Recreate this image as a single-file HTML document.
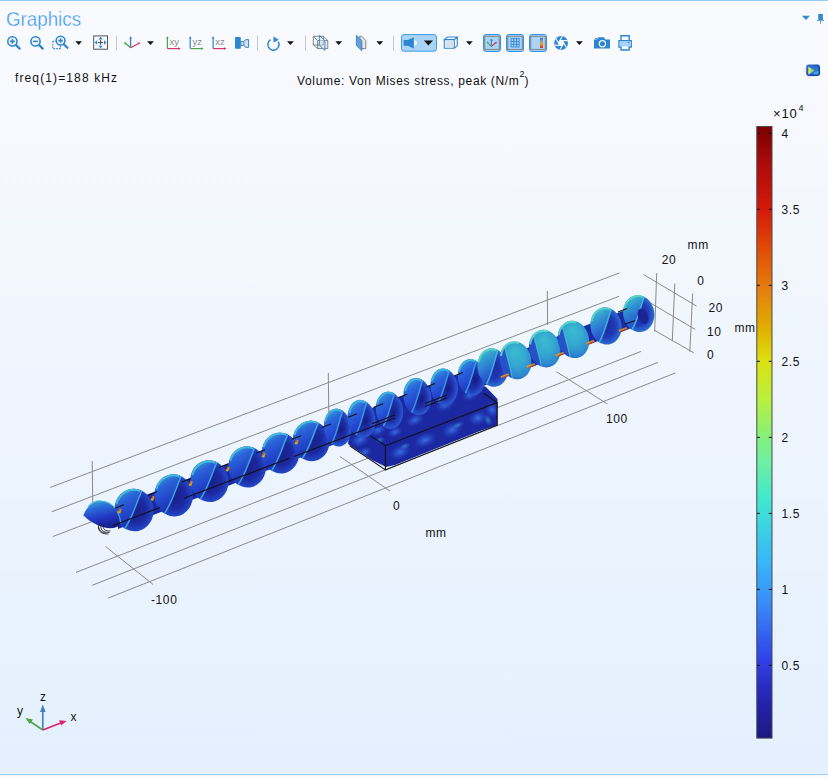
<!DOCTYPE html>
<html><head><meta charset="utf-8">
<style>
html,body{margin:0;padding:0;}
body{width:828px;height:778px;position:relative;overflow:hidden;font-family:"Liberation Sans",sans-serif;
background:linear-gradient(to bottom,#f9fafe 0px,#f7f9fe 100px,#eef5fe 405px,#e4f0fe 772px);}
.t{position:absolute;white-space:nowrap;font-size:12px;line-height:12px;color:#111;}
#topb{position:absolute;left:0;top:0;width:828px;height:1px;background:#90ccf6;}
#topw{position:absolute;left:0;top:1px;width:828px;height:1px;background:#fdfeff;}
#botb{position:absolute;left:0;top:774px;width:828px;height:1px;background:#9ccff8;}
#botw{position:absolute;left:0;top:775px;width:828px;height:3px;background:#f8fafe;}
#title{position:absolute;left:6px;top:8.1px;font-size:21px;line-height:21px;color:#3a98ec;white-space:nowrap;transform-origin:0 0;transform:scaleX(0.893);-webkit-text-stroke:0.35px #f8f9fe;}
svg{position:absolute;left:0;top:0;}
</style></head><body>
<div id="topb"></div><div id="topw"></div><div id="botb"></div><div id="botw"></div>
<div id="title">Graphics</div>
<svg width="828" height="60" viewBox="0 0 828 60" style="top:0;left:0">
<g fill="none" stroke="#2f86d0" stroke-width="1.6">
  <circle cx="12.4" cy="41.4" r="4.6"/><path d="M10 41.4H14.9M12.4 39V43.8"/>
  <path d="M16 45L19.6 48.6" stroke-width="2.3" stroke-linecap="round"/>
  <circle cx="35.5" cy="41.4" r="4.6"/><path d="M33 41.4H38"/>
  <path d="M39.1 45L42.7 48.6" stroke-width="2.3" stroke-linecap="round"/>
  <circle cx="60.6" cy="40.6" r="4.4"/><path d="M58.4 40.6H62.8M60.6 38.4V42.8"/>
  <path d="M63.8 44.2L67.4 47.8" stroke-width="2.3" stroke-linecap="round"/>
  <path d="M52.8 41.2h5M52.8 41.2v7.4h7.6v-3" stroke-dasharray="1.6 1.1" stroke-width="1.1"/>
</g>
<g fill="#111">
  <path d="M75.4 41.3h6.5l-3.25 3.7z"/>
  <path d="M147.1 41.2h6.8l-3.4 3.8z"/>
  <path d="M287 41.2h6.8l-3.4 3.8z"/>
  <path d="M335.3 41.2h6.8l-3.4 3.8z"/>
  <path d="M376.4 41.2h6.8l-3.4 3.8z"/>
  <path d="M466 41.2h6.8l-3.4 3.8z"/>
  <path d="M576 41.2h6.8l-3.4 3.8z"/>
</g>
<!-- zoom extents -->
<rect x="93.7" y="35.9" width="13.8" height="13.3" fill="none" stroke="#555" stroke-width="1"/>
<g fill="#2f86d0"><path d="M100.6 36.8l2.2 2.6h-4.4z M100.6 48.3l2.2-2.6h-4.4z M94.6 42.5l2.6-2.2v4.4z M106.6 42.5l-2.6-2.2v4.4z"/></g>
<path d="M98 42.5h5.2M100.6 39.9v5.2" stroke="#555" stroke-width="1.1"/>
<g stroke="#c8c8c8" stroke-width="1"><path d="M116.5 35.5V50.5M257.5 35.5V50.5M305.5 35.5V50.5M393.5 35.5V50.5"/></g>
<!-- axis icon -->
<g stroke-width="1.3" fill="none">
 <path d="M130.6 47.8V37.5" stroke="#2f86d0"/><path d="M130.6 47.8L124.6 42.6" stroke="#4aa84a"/><path d="M130.6 47.8L139.6 43" stroke="#d8346a"/>
</g>
<path d="M130.6 36.2l-1.5 2.4h3z" fill="#2f86d0"/><path d="M124.2 42.2l0.6 2.6 1.6-1.9z" fill="#4aa84a"/><path d="M140.2 42.6l-2.6-0.1 1 2z" fill="#d8346a"/>
<!-- xy yz xz -->
<g stroke-width="1.2" fill="none">
 <path d="M167.4 37.4V48.6" stroke="#4aa84a"/><path d="M167.4 48.6H179.4" stroke="#d8346a"/>
 <path d="M190.2 37.4V48.6" stroke="#2f86d0"/><path d="M190.2 48.6H202.4" stroke="#4aa84a"/>
 <path d="M213.1 37.4V48.6" stroke="#2f86d0"/><path d="M213.1 48.6H225.2" stroke="#d8346a"/>
</g>
<path d="M167.4 36.2l-1.4 2.2h2.8z" fill="#4aa84a"/><path d="M180.6 48.6l-2.2-1.4v2.8z" fill="#d8346a"/>
<path d="M190.2 36.2l-1.4 2.2h2.8z" fill="#2f86d0"/><path d="M203.6 48.6l-2.2-1.4v2.8z" fill="#4aa84a"/>
<path d="M213.1 36.2l-1.4 2.2h2.8z" fill="#2f86d0"/><path d="M226.4 48.6l-2.2-1.4v2.8z" fill="#d8346a"/>
<g font-family="Liberation Sans" font-size="9.5" fill="#8c8c8c">
 <text x="169.6" y="44.8">xy</text><text x="192.4" y="44.8">yz</text><text x="215.3" y="44.8">xz</text>
</g>
<!-- camera/speaker -->
<rect x="235" y="37.1" width="5.8" height="11.6" rx="0.8" fill="#2f86d0"/>
<path d="M240.8 41.5h2.8l2.4-1.9h2.6v7.8h-2.6l-2.4-1.9h-2.8z" fill="#d8dde8" stroke="#2f86d0" stroke-width="1"/>
<path d="M243.9 41.6v3.8" stroke="#2f86d0" stroke-width="0.9"/>
<!-- rotate -->
<path d="M278.2 41.6A5.6 5.6 0 1 1 270.6 39.7" fill="none" stroke="#2f86d0" stroke-width="1.5"/>
<path d="M273.4 36.4l5.4 3.4-5.2 2.6z" fill="#2f86d0"/>
<!-- wireframe cube -->
<path d="M317.6 40.6h10.2v8h-10.2z" fill="#e8e8e8"/>
<g fill="none" stroke="#777" stroke-width="0.9">
 <path d="M313.3 36.3h10.1l4.4 4.3v8h-10.2l-4.3-3.6z M313.3 36.3l4.3 4.3h10.2 M317.6 40.6v8 M313.3 45h10.1v-8.7"/>
</g>
<path d="M319.4 35.2l5.5 5.4v9.8l-5.5-5.1z" fill="#cfe0f2" fill-opacity="0.5" stroke="#2f86d0" stroke-width="0.9"/>
<!-- box with blue side -->
<path d="M359.6 36.3h2.2l4 4.3v8h-4z" fill="#e8e8e8" stroke="#777" stroke-width="0.9"/>
<path d="M356.4 35.2l5.4 5.4v10.2l-5.4-5.5z" fill="#6c9ed6" stroke="#2f86d0" stroke-width="0.9"/>
<!-- selected light button -->
<rect x="401.5" y="34.6" width="35" height="16.6" rx="2.5" fill="#a9d3f7" stroke="#3d9be8" stroke-width="1"/>
<path d="M403.6 40h4.2l6-2.8v11.4l-6-2.8h-4.2z" fill="#2f86d0"/>
<path d="M414.2 40.2a2.6 2.6 0 0 1 0 5.6z" fill="#eef6fe"/>
<path d="M423.8 40.6h9.2l-4.6 4.8z" fill="#111"/>
<!-- box icon -->
<g fill="none" stroke="#2f86d0" stroke-width="1.1">
 <path d="M444.3 39.6l3-2.6h10l-3 2.6z M444.3 39.6v8.6h10v-8.6 M457.3 37v8.6l-3 2.6"/>
</g>
<path d="M445.6 40.8h7.6v6.2h-7.6z" fill="#d4e2f0"/>
<!-- toggled buttons -->
<g>
 <rect x="483.5" y="34.5" width="17" height="17" rx="2.2" fill="#a9d3f7" stroke="#2a92f0" stroke-width="1"/>
 <rect x="484.7" y="36.3" width="14.6" height="13.2" fill="none" stroke="#868686" stroke-width="1.1"/>
 <path d="M491.4 46.4v-6.4" stroke="#2f86d0" stroke-width="1.1"/><path d="M491.4 38.6l-1.5 2h3z" fill="#2f86d0"/>
 <path d="M491.4 46.4l-3.6-3.6" stroke="#4aa84a" stroke-width="1.1"/><circle cx="487.6" cy="42.6" r="0.9" fill="#4aa84a"/>
 <path d="M491.4 46.4l4.4-3.6" stroke="#d8346a" stroke-width="1.1"/><circle cx="496" cy="42.6" r="0.9" fill="#d8346a"/>
 <rect x="506.5" y="34.5" width="17" height="17" rx="2.2" fill="#a9d3f7" stroke="#2a92f0" stroke-width="1"/>
 <rect x="507.7" y="36.3" width="14.6" height="13.2" fill="none" stroke="#868686" stroke-width="1.1"/>
 <rect x="510.6" y="38.2" width="9" height="9.2" fill="#2f86d0"/>
 <g fill="#a9d3f7"><rect x="511.5" y="39.1" width="1.8" height="1.9"/><rect x="514.2" y="39.1" width="1.8" height="1.9"/><rect x="516.9" y="39.1" width="1.8" height="1.9"/><rect x="511.5" y="41.9" width="1.8" height="1.9"/><rect x="514.2" y="41.9" width="1.8" height="1.9"/><rect x="516.9" y="41.9" width="1.8" height="1.9"/><rect x="511.5" y="44.7" width="1.8" height="1.9"/><rect x="514.2" y="44.7" width="1.8" height="1.9"/><rect x="516.9" y="44.7" width="1.8" height="1.9"/></g>
 <rect x="529.5" y="34.5" width="17" height="17" rx="2.2" fill="#a9d3f7" stroke="#2a92f0" stroke-width="1"/>
 <rect x="530.7" y="36.3" width="14.6" height="13.2" fill="none" stroke="#868686" stroke-width="1.1"/>
 <defs><linearGradient id="lg1" x1="0" y1="0" x2="0" y2="1"><stop offset="0" stop-color="#3a78c0"/><stop offset="0.35" stop-color="#9aa0a0"/><stop offset="0.6" stop-color="#f0a010"/><stop offset="1" stop-color="#e02040"/></linearGradient></defs>
 <rect x="540" y="37.9" width="3" height="10.1" fill="url(#lg1)"/>
</g>
<!-- aperture -->
<circle cx="561.1" cy="43.0" r="6.9" fill="#2f86d0"/>
<path d="M563.80 43.00 L562.45 45.34 L559.75 45.34 L558.40 43.00 L559.75 40.66 L562.45 40.66Z" fill="#f8f9fe"/>
<path d="M563.80 43.00L559.88 49.79 M562.45 45.34L554.61 45.34 M559.75 45.34L555.83 38.55 M558.40 43.00L562.32 36.21 M559.75 40.66L567.59 40.66 M562.45 40.66L566.37 47.45" stroke="#f8f9fe" stroke-width="1.1"/>
<!-- camera -->
<path d="M594 39.4h3l1.4-2.2h5.6l1.4 2.2h4.6v9.2H594z" fill="#2f86d0"/>
<circle cx="602.4" cy="43.8" r="3.1" fill="none" stroke="#f8f9fe" stroke-width="1.2"/>
<rect x="595.2" y="38" width="2" height="1.2" fill="#2f86d0"/>
<!-- printer -->
<g fill="none" stroke="#2f86d0" stroke-width="1.4">
 <path d="M621 41v-5.3h8.2V41"/>
 <path d="M621 47h-2v-6.2h12.2V47h-2"/>
 <path d="M621 44.8h8.2v5.2H621z"/>
</g>
<path d="M619.6 41.4h11v5h-11z" fill="#a9d3f7"/>
<path d="M627.6 42.6h2" stroke="#2f86d0" stroke-width="0.9"/>
<!-- top right -->
<path d="M801.9 15.8h8.1l-4.05 4.1z" fill="#3a8ad0"/>
<path d="M818.2 13.9h4.7v6h1.1v0.9h-3.2v3h-0.8v-3h-3.2v-0.9h1.4z" fill="#3a8ad0"/>
</svg>
<!-- small legend icon -->
<svg width="22" height="20" viewBox="0 0 22 20" style="left:802px;top:60px">
 <defs><linearGradient id="ico" x1="0" y1="0" x2="1" y2="1"><stop offset="0" stop-color="#3a70d0"/><stop offset="0.5" stop-color="#2050c0"/><stop offset="1" stop-color="#0c2890"/></linearGradient>
 <linearGradient id="ico2" x1="0" y1="0" x2="1" y2="0"><stop offset="0" stop-color="#f4e860"/><stop offset="0.6" stop-color="#a0d060"/><stop offset="1" stop-color="#3aa0e0"/></linearGradient></defs>
 <path d="M1.5 8.5l14-4.5 4 9.5-13.5 5z" fill="#dcdcdc" opacity="0.6"/>
 <rect x="4.2" y="4.6" width="13.8" height="11.4" rx="2.4" fill="url(#ico)"/>
 <path d="M6.2 6.6h8.6l1.6 2v4.8l-1 1.2H6.2z" fill="#2a78d0"/>
 <path d="M6.3 6.8v7.6l6.6-3.8z" fill="url(#ico2)"/>
 <path d="M12 12.2l4.6-1.4v2.6l-0.8 1H12z" fill="#40b0f0" opacity="0.8"/>
</svg>
<svg width="828" height="778" viewBox="0 0 828 778" style="left:0;top:0">
<g stroke="#8a8a8a" stroke-width="1" fill="none">
<path d="M50.3 487.4L619.6 272.9"/>
<path d="M51.6 511.8L619.1 296.3"/>
<path d="M52.9 536.5L620.0 320.5"/>
<path d="M92.2 461.0L92.8 505.0"/>
<path d="M328.3 373.0L328.8 415.0"/>
<path d="M547.3 291.0L547.6 325.0"/>
<path d="M643.7 274.6L696.5 306.0"/>
<path d="M650.0 302.7L695.2 329.4"/>
<path d="M654.2 330.2L693.8 352.8"/>
<path d="M656.7 273.1L654.7 331.6"/>
<path d="M674.8 283.5L672.3 341.1"/>
<path d="M692.7 293.5L689.8 352.0"/>
<path d="M76.0 572.4L641.1 351.4"/>
<path d="M92.2 585.3L658.0 362.4"/>
<path d="M108.1 598.1L675.5 372.9"/>
<path d="M105.5 546.5L153.1 584.5"/>
<path d="M339.8 456.4L390.0 491.1"/>
<path d="M556.6 371.8L607.4 404.0"/>
</g><defs>
<radialGradient id="blob" cx="0.5" cy="0.5" r="0.5"><stop offset="0" stop-color="#3a78e8" stop-opacity="0.9"/><stop offset="1" stop-color="#2a50d8" stop-opacity="0"/></radialGradient>
<radialGradient id="blobc" cx="0.5" cy="0.5" r="0.5"><stop offset="0" stop-color="#40b0e0" stop-opacity="0.6"/><stop offset="1" stop-color="#3090e0" stop-opacity="0"/></radialGradient>
</defs>
<clipPath id="boxclip"><path d="M348 444 L350 428 L372 418 L470 380 L486 387 L497.5 399 L497.5 425 L480 431 L395 465 L386 467 L372 460 L360 452Z"/></clipPath>
<path d="M348 444 L350 428 L372 418 L470 380 L486 387 L497.5 399 L497.5 425 L480 431 L395 465 L386 467 L372 460 L360 452Z" fill="#1c28a2"/>
<g clip-path="url(#boxclip)">
<ellipse cx="360" cy="440" rx="10" ry="7" fill="url(#blob)" transform="rotate(-22 360 440)"/>
<ellipse cx="378" cy="430" rx="9" ry="6" fill="url(#blob)" transform="rotate(-22 378 430)"/>
<ellipse cx="400" cy="452" rx="11" ry="7" fill="url(#blob)" transform="rotate(-22 400 452)"/>
<ellipse cx="425" cy="440" rx="12" ry="7" fill="url(#blob)" transform="rotate(-22 425 440)"/>
<ellipse cx="452" cy="430" rx="11" ry="7" fill="url(#blob)" transform="rotate(-22 452 430)"/>
<ellipse cx="478" cy="418" rx="10" ry="7" fill="url(#blob)" transform="rotate(-22 478 418)"/>
<ellipse cx="492" cy="410" rx="7" ry="8" fill="url(#blob)" transform="rotate(-22 492 410)"/>
<ellipse cx="415" cy="420" rx="10" ry="6" fill="url(#blob)" transform="rotate(-22 415 420)"/>
<ellipse cx="445" cy="405" rx="10" ry="6" fill="url(#blob)" transform="rotate(-22 445 405)"/>
<ellipse cx="470" cy="395" rx="9" ry="6" fill="url(#blob)" transform="rotate(-22 470 395)"/>
<ellipse cx="395" cy="432" rx="8" ry="5" fill="url(#blob)" transform="rotate(-22 395 432)"/>
<ellipse cx="365" cy="452" rx="7" ry="5" fill="url(#blob)" transform="rotate(-22 365 452)"/>
<ellipse cx="437" cy="455" rx="8" ry="5" fill="url(#blob)" transform="rotate(-22 437 455)"/>
<ellipse cx="468" cy="440" rx="8" ry="5" fill="url(#blob)" transform="rotate(-22 468 440)"/>
<ellipse cx="405" cy="446" rx="6" ry="3" fill="url(#blobc)" transform="rotate(-22 405 446)"/>
<ellipse cx="458" cy="425" rx="7" ry="3" fill="url(#blobc)" transform="rotate(-22 458 425)"/>
<ellipse cx="488" cy="420" rx="4" ry="6" fill="url(#blobc)" transform="rotate(-22 488 420)"/>
<ellipse cx="380" cy="440" rx="5" ry="3" fill="url(#blobc)" transform="rotate(-22 380 440)"/>
</g><defs>
<radialGradient id="lbaseA" cx="0.5" cy="0.5" r="0.5">
<stop offset="0" stop-color="#18208a"/><stop offset="0.6" stop-color="#1c28a0"/><stop offset="1" stop-color="#2448c8"/>
</radialGradient>
<radialGradient id="hole" cx="0.5" cy="0.5" r="0.5">
<stop offset="0" stop-color="#141a80" stop-opacity="0.95"/><stop offset="0.6" stop-color="#18208c" stop-opacity="0.7"/><stop offset="1" stop-color="#1c2898" stop-opacity="0"/>
</radialGradient>
<linearGradient id="lleftA" x1="0.3" y1="0" x2="0.6" y2="1">
<stop offset="0" stop-color="#36a4d8"/><stop offset="0.25" stop-color="#2a64d8"/><stop offset="0.65" stop-color="#2240c8"/><stop offset="1" stop-color="#1c2ca8"/>
</linearGradient>
<radialGradient id="lbaseC" cx="0.55" cy="0.45" r="0.6" fx="0.55" fy="0.25">
<stop offset="0" stop-color="#3cbcd0"/><stop offset="0.5" stop-color="#34a8d0"/><stop offset="0.85" stop-color="#2c88d0"/><stop offset="1" stop-color="#2860c8"/>
</radialGradient>
<linearGradient id="lleftC" x1="0.3" y1="0" x2="0.6" y2="1">
<stop offset="0" stop-color="#46ccc8"/><stop offset="0.35" stop-color="#38b0cc"/><stop offset="0.75" stop-color="#3094d0"/><stop offset="1" stop-color="#2a70c8"/>
</linearGradient>
<radialGradient id="lbaseD" cx="0.5" cy="0.5" r="0.5">
<stop offset="0" stop-color="#1c2a9c"/><stop offset="0.6" stop-color="#2038b8"/><stop offset="1" stop-color="#2a70d0"/>
</radialGradient>
<linearGradient id="lleftD" x1="0.3" y1="0" x2="0.6" y2="1">
<stop offset="0" stop-color="#44c4c8"/><stop offset="0.3" stop-color="#3098d0"/><stop offset="0.7" stop-color="#2a60d4"/><stop offset="1" stop-color="#2240c0"/>
</linearGradient>
<radialGradient id="lbaseM" cx="0.5" cy="0.5" r="0.5">
<stop offset="0" stop-color="#1a2290"/><stop offset="0.6" stop-color="#1e2ca8"/><stop offset="1" stop-color="#2a5ad4"/>
</radialGradient>
<linearGradient id="lleftM" x1="0.3" y1="0" x2="0.6" y2="1">
<stop offset="0" stop-color="#38a8dc"/><stop offset="0.3" stop-color="#2a68dc"/><stop offset="0.7" stop-color="#2444d0"/><stop offset="1" stop-color="#1e30b0"/>
</linearGradient>
</defs>
<path d="M118.0 505.8 L126.8 502.4 L135.7 499.0 L144.5 495.6 L153.3 492.2 L162.2 488.8 L171.0 485.4 L179.8 482.0 L188.7 478.6 L197.5 475.2 L206.3 471.8 L215.2 468.3 L224.0 464.9 L232.8 461.5 L241.7 458.1 L250.5 454.7 L259.3 451.3 L268.2 447.9 L277.0 444.5 L285.8 441.1 L294.7 437.7 L303.5 434.3 L312.3 430.9 L321.2 427.5 L330.0 424.1 L338.8 420.7 L347.7 417.2 L356.5 413.8 L365.3 410.4 L374.2 407.0 L383.0 403.6 L391.8 400.2 L400.7 396.8 L409.5 393.4 L418.3 390.0 L427.2 386.6 L436.0 383.2 L444.8 379.8 L453.7 376.4 L462.5 373.0 L471.3 369.5 L480.2 366.1 L489.0 362.7 L497.8 359.3 L506.7 355.9 L515.5 352.5 L524.3 349.1 L533.2 345.7 L542.0 342.3 L550.8 338.9 L559.7 335.5 L568.5 332.1 L577.3 328.7 L586.2 325.3 L595.0 321.9 L603.8 318.4 L612.7 315.0 L621.5 311.6 L630.3 308.2 L639.2 304.8 L648.0 301.4 L648.0 321.5 L639.2 325.0 L630.3 328.4 L621.5 331.9 L612.7 335.3 L603.8 338.8 L595.0 342.2 L586.2 345.7 L577.3 349.1 L568.5 352.6 L559.7 356.1 L550.8 359.5 L542.0 363.0 L533.2 366.4 L524.3 369.9 L515.5 373.3 L506.7 376.8 L497.8 380.3 L489.0 383.7 L480.2 387.2 L471.3 390.6 L462.5 394.1 L453.7 397.5 L444.8 401.0 L436.0 404.5 L427.2 407.9 L418.3 411.4 L409.5 414.8 L400.7 418.3 L391.8 421.7 L383.0 425.2 L374.2 428.7 L365.3 432.1 L356.5 435.6 L347.7 439.0 L338.8 442.5 L330.0 445.9 L321.2 449.4 L312.3 452.9 L303.5 456.3 L294.7 459.8 L285.8 463.2 L277.0 466.7 L268.2 470.1 L259.3 473.6 L250.5 477.1 L241.7 480.5 L232.8 484.0 L224.0 487.4 L215.2 490.9 L206.3 494.3 L197.5 497.8 L188.7 501.2 L179.8 504.7 L171.0 508.2 L162.2 511.6 L153.3 515.1 L144.5 518.5 L135.7 522.0 L126.8 525.4 L118.0 528.9Z" fill="#1c2aa4"/>
<g transform="translate(134.2,510.1) rotate(-8)"><ellipse rx="19.3" ry="21.3" fill="url(#lbaseA)"/><path d="M-11.9 16.8C-2.9 7.5 1.9 -4.3 10.2 -18.1A19.3 21.3 0 0 0 -11.9 16.8Z" fill="url(#lleftA)"/><path d="M-11.9 16.8C-2.9 7.5 1.9 -4.3 10.2 -18.1" stroke="#40c0e0" stroke-width="1.5" fill="none" opacity="0.8"/><path d="M-16.6 -8.6A18.3 20.2 0 0 1 8.6 -17.9" stroke="#48c4dc" stroke-width="2" fill="none" opacity="0.85"/></g>
<g transform="translate(173.7,495.4) rotate(-8)"><ellipse rx="19.1" ry="21.1" fill="url(#lbaseA)"/><path d="M-11.8 16.6C-2.9 7.4 1.9 -4.2 10.1 -17.9A19.1 21.1 0 0 0 -11.8 16.6Z" fill="url(#lleftA)"/><path d="M-11.8 16.6C-2.9 7.4 1.9 -4.2 10.1 -17.9" stroke="#40c0e0" stroke-width="1.5" fill="none" opacity="0.8"/><path d="M-16.4 -8.5A18.1 20.0 0 0 1 8.5 -17.7" stroke="#48c4dc" stroke-width="2" fill="none" opacity="0.85"/></g>
<g transform="translate(209.5,481.2) rotate(-8)"><ellipse rx="18.9" ry="20.9" fill="url(#lbaseA)"/><path d="M-11.7 16.5C-2.8 7.3 1.9 -4.2 10.0 -17.7A18.9 20.9 0 0 0 -11.7 16.5Z" fill="url(#lleftA)"/><path d="M-11.7 16.5C-2.8 7.3 1.9 -4.2 10.0 -17.7" stroke="#40c0e0" stroke-width="1.5" fill="none" opacity="0.8"/><path d="M-16.3 -8.4A18.0 19.8 0 0 1 8.4 -17.5" stroke="#48c4dc" stroke-width="2" fill="none" opacity="0.85"/></g>
<g transform="translate(247.2,466.9) rotate(-8)"><ellipse rx="18.7" ry="20.7" fill="url(#lbaseA)"/><path d="M-11.5 16.3C-2.8 7.2 1.9 -4.1 9.9 -17.5A18.7 20.7 0 0 0 -11.5 16.3Z" fill="url(#lleftA)"/><path d="M-11.5 16.3C-2.8 7.2 1.9 -4.1 9.9 -17.5" stroke="#40c0e0" stroke-width="1.5" fill="none" opacity="0.8"/><path d="M-16.1 -8.3A17.8 19.6 0 0 1 8.4 -17.3" stroke="#48c4dc" stroke-width="2" fill="none" opacity="0.85"/></g>
<g transform="translate(280.5,453.1) rotate(-8)"><ellipse rx="18.6" ry="20.5" fill="url(#lbaseA)"/><path d="M-11.4 16.2C-2.8 7.2 1.9 -4.1 9.8 -17.4A18.6 20.5 0 0 0 -11.4 16.2Z" fill="url(#lleftA)"/><path d="M-11.4 16.2C-2.8 7.2 1.9 -4.1 9.8 -17.4" stroke="#40c0e0" stroke-width="1.5" fill="none" opacity="0.8"/><path d="M-16.0 -8.2A17.6 19.5 0 0 1 8.3 -17.2" stroke="#48c4dc" stroke-width="2" fill="none" opacity="0.85"/></g>
<g transform="translate(311.2,441.0) rotate(-8)"><ellipse rx="18.3" ry="20.3" fill="url(#lbaseA)"/><path d="M-11.3 16.0C-2.7 7.1 1.8 -4.1 9.7 -17.2A18.3 20.3 0 0 0 -11.3 16.0Z" fill="url(#lleftA)"/><path d="M-11.3 16.0C-2.7 7.1 1.8 -4.1 9.7 -17.2" stroke="#40c0e0" stroke-width="1.5" fill="none" opacity="0.8"/><path d="M-15.8 -8.2A17.4 19.3 0 0 1 8.2 -17.1" stroke="#48c4dc" stroke-width="2" fill="none" opacity="0.85"/></g>
<g transform="translate(337.7,427.6) rotate(-8)"><ellipse rx="13.5" ry="19.0" fill="url(#lbaseM)"/><path d="M-8.3 14.9C-2.0 6.6 1.4 -3.8 7.2 -16.1A13.5 19.0 0 0 0 -8.3 14.9Z" fill="url(#lleftM)"/><path d="M-8.3 14.9C-2.0 6.6 1.4 -3.8 7.2 -16.1" stroke="#3ab0e0" stroke-width="1.5" fill="none" opacity="0.8"/><path d="M-11.6 -7.6A12.8 18.0 0 0 1 6.0 -15.9" stroke="#44bcdc" stroke-width="2" fill="none" opacity="0.85"/><ellipse cx="3.4" cy="2.8" rx="4.0" ry="6.6" fill="url(#hole)" transform="rotate(25 3.4 2.8)"/></g>
<g transform="translate(361.9,419.0) rotate(-8)"><ellipse rx="13.5" ry="18.8" fill="url(#lbaseM)"/><path d="M-8.3 14.8C-2.0 6.6 1.4 -3.8 7.2 -16.0A13.5 18.8 0 0 0 -8.3 14.8Z" fill="url(#lleftM)"/><path d="M-8.3 14.8C-2.0 6.6 1.4 -3.8 7.2 -16.0" stroke="#3ab0e0" stroke-width="1.5" fill="none" opacity="0.8"/><path d="M-11.6 -7.6A12.8 17.9 0 0 1 6.0 -15.8" stroke="#44bcdc" stroke-width="2" fill="none" opacity="0.85"/><ellipse cx="3.4" cy="2.8" rx="4.0" ry="6.6" fill="url(#hole)" transform="rotate(25 3.4 2.8)"/></g>
<g transform="translate(389.5,410.3) rotate(-8)"><ellipse rx="13.5" ry="18.7" fill="url(#lbaseM)"/><path d="M-8.3 14.7C-2.0 6.5 1.4 -3.7 7.2 -15.8A13.5 18.7 0 0 0 -8.3 14.7Z" fill="url(#lleftM)"/><path d="M-8.3 14.7C-2.0 6.5 1.4 -3.7 7.2 -15.8" stroke="#3ab0e0" stroke-width="1.5" fill="none" opacity="0.8"/><path d="M-11.6 -7.5A12.8 17.8 0 0 1 6.0 -15.7" stroke="#44bcdc" stroke-width="2" fill="none" opacity="0.85"/><ellipse cx="3.4" cy="2.8" rx="4.0" ry="6.5" fill="url(#hole)" transform="rotate(25 3.4 2.8)"/></g>
<g transform="translate(417.7,396.8) rotate(-8)"><ellipse rx="13.5" ry="18.5" fill="url(#lbaseM)"/><path d="M-8.3 14.6C-2.0 6.5 1.4 -3.7 7.2 -15.7A13.5 18.5 0 0 0 -8.3 14.6Z" fill="url(#lleftM)"/><path d="M-8.3 14.6C-2.0 6.5 1.4 -3.7 7.2 -15.7" stroke="#3ab0e0" stroke-width="1.5" fill="none" opacity="0.8"/><path d="M-11.6 -7.4A12.8 17.6 0 0 1 6.0 -15.6" stroke="#44bcdc" stroke-width="2" fill="none" opacity="0.85"/><ellipse cx="3.4" cy="2.8" rx="4.0" ry="6.5" fill="url(#hole)" transform="rotate(25 3.4 2.8)"/></g>
<g transform="translate(444.3,387.0) rotate(-8)"><ellipse rx="13.5" ry="18.4" fill="url(#lbaseM)"/><path d="M-8.3 14.5C-2.0 6.4 1.4 -3.7 7.2 -15.6A13.5 18.4 0 0 0 -8.3 14.5Z" fill="url(#lleftM)"/><path d="M-8.3 14.5C-2.0 6.4 1.4 -3.7 7.2 -15.6" stroke="#3ab0e0" stroke-width="1.5" fill="none" opacity="0.8"/><path d="M-11.6 -7.4A12.8 17.5 0 0 1 6.0 -15.4" stroke="#44bcdc" stroke-width="2" fill="none" opacity="0.85"/><ellipse cx="3.4" cy="2.8" rx="4.0" ry="6.4" fill="url(#hole)" transform="rotate(25 3.4 2.8)"/></g>
<g transform="translate(471.5,377.4) rotate(-8)"><ellipse rx="13.5" ry="18.3" fill="url(#lbaseM)"/><path d="M-8.3 14.4C-2.0 6.4 1.4 -3.7 7.2 -15.5A13.5 18.3 0 0 0 -8.3 14.4Z" fill="url(#lleftM)"/><path d="M-8.3 14.4C-2.0 6.4 1.4 -3.7 7.2 -15.5" stroke="#3ab0e0" stroke-width="1.5" fill="none" opacity="0.8"/><path d="M-11.6 -7.3A12.8 17.3 0 0 1 6.0 -15.3" stroke="#44bcdc" stroke-width="2" fill="none" opacity="0.85"/><ellipse cx="3.4" cy="2.7" rx="4.0" ry="6.4" fill="url(#hole)" transform="rotate(25 3.4 2.7)"/></g>
<g transform="translate(492.9,367.6) rotate(-10)"><ellipse rx="15.1" ry="19.3" fill="url(#lbaseD)"/><path d="M-9.3 15.2C-2.3 6.8 1.5 -3.9 8.0 -16.4A15.1 19.3 0 0 0 -9.3 15.2Z" fill="url(#lleftD)"/><path d="M-9.3 15.2C-2.3 6.8 1.5 -3.9 8.0 -16.4" stroke="#48c8d8" stroke-width="1.5" fill="none" opacity="0.8"/><path d="M-13.0 -7.8A14.3 18.4 0 0 1 6.7 -16.2" stroke="#58d8c8" stroke-width="2" fill="none" opacity="0.85"/></g>
<g transform="translate(515.8,360.3) rotate(-14)"><ellipse rx="15.5" ry="19.2" fill="url(#lbaseC)"/><path d="M-7.7 16.6C-7.0 3.8 -7.8 -5.8 -7.7 -16.6A15.5 19.2 0 0 0 -7.7 16.6Z" fill="#2446c4" opacity="0.85"/><path d="M-7.7 16.6C-7.0 3.8 -7.8 -5.8 -7.7 -16.6" stroke="#58d8d0" stroke-width="1.2" fill="none" opacity="0.6"/><path d="M-13.3 -7.7A14.7 18.2 0 0 1 6.9 -16.1" stroke="#60e0c8" stroke-width="2" fill="none" opacity="0.85"/></g>
<g transform="translate(544.8,348.6) rotate(-14)"><ellipse rx="15.5" ry="19.0" fill="url(#lbaseC)"/><path d="M-7.7 16.5C-7.0 3.8 -7.8 -5.7 -7.7 -16.5A15.5 19.0 0 0 0 -7.7 16.5Z" fill="#2446c4" opacity="0.85"/><path d="M-7.7 16.5C-7.0 3.8 -7.8 -5.7 -7.7 -16.5" stroke="#58d8d0" stroke-width="1.2" fill="none" opacity="0.6"/><path d="M-13.3 -7.6A14.7 18.1 0 0 1 6.9 -16.0" stroke="#60e0c8" stroke-width="2" fill="none" opacity="0.85"/></g>
<g transform="translate(573.5,339.4) rotate(-14)"><ellipse rx="15.5" ry="18.9" fill="url(#lbaseC)"/><path d="M-7.7 16.4C-7.0 3.8 -7.8 -5.7 -7.7 -16.4A15.5 18.9 0 0 0 -7.7 16.4Z" fill="#2446c4" opacity="0.85"/><path d="M-7.7 16.4C-7.0 3.8 -7.8 -5.7 -7.7 -16.4" stroke="#58d8d0" stroke-width="1.2" fill="none" opacity="0.6"/><path d="M-13.3 -7.6A14.7 17.9 0 0 1 6.9 -15.8" stroke="#60e0c8" stroke-width="2" fill="none" opacity="0.85"/></g>
<g transform="translate(606.0,326.0) rotate(-10)"><ellipse rx="15.5" ry="18.7" fill="url(#lbaseD)"/><path d="M-9.5 14.7C-2.3 6.5 1.6 -3.7 8.2 -15.9A15.5 18.7 0 0 0 -9.5 14.7Z" fill="url(#lleftD)"/><path d="M-9.5 14.7C-2.3 6.5 1.6 -3.7 8.2 -15.9" stroke="#48c8d8" stroke-width="1.5" fill="none" opacity="0.8"/><path d="M-13.3 -7.5A14.7 17.8 0 0 1 6.9 -15.7" stroke="#58d8c8" stroke-width="2" fill="none" opacity="0.85"/></g>
<g transform="translate(638.8,313.6) rotate(-10)"><ellipse rx="15.5" ry="18.5" fill="url(#lbaseD)"/><path d="M-9.5 14.6C-2.3 6.5 1.6 -3.7 8.2 -15.7A15.5 18.5 0 0 0 -9.5 14.6Z" fill="url(#lleftD)"/><path d="M-9.5 14.6C-2.3 6.5 1.6 -3.7 8.2 -15.7" stroke="#48c8d8" stroke-width="1.5" fill="none" opacity="0.8"/><path d="M-13.3 -7.4A14.7 17.6 0 0 1 6.9 -15.5" stroke="#58d8c8" stroke-width="2" fill="none" opacity="0.85"/><ellipse cx="3" cy="4" rx="5" ry="8" fill="#1a2494" transform="rotate(-10)"/></g>
<path d="M500.8 377.1L508.8 374.1" stroke="#f0a010" stroke-width="2" opacity="0.85"/><path d="M501.8 377.8L507.8 375.3" stroke="#e03010" stroke-width="1" opacity="0.8"/>
<path d="M526.8 367.0L534.8 364.0" stroke="#f0a010" stroke-width="2" opacity="0.85"/><path d="M527.8 367.7L533.8 365.2" stroke="#e03010" stroke-width="1" opacity="0.8"/>
<path d="M555.6 355.7L563.6 352.7" stroke="#f0a010" stroke-width="2" opacity="0.85"/><path d="M556.6 356.4L562.6 353.9" stroke="#e03010" stroke-width="1" opacity="0.8"/>
<path d="M586.2 343.7L594.2 340.7" stroke="#f0a010" stroke-width="2" opacity="0.85"/><path d="M587.2 344.4L593.2 341.9" stroke="#e03010" stroke-width="1" opacity="0.8"/>
<path d="M618.9 330.9L626.9 327.9" stroke="#f0a010" stroke-width="2" opacity="0.85"/><path d="M619.9 331.6L625.9 329.1" stroke="#e03010" stroke-width="1" opacity="0.8"/><defs><linearGradient id="capg" x1="0.2" y1="0" x2="0.5" y2="1"><stop offset="0" stop-color="#3aa8dc"/><stop offset="0.3" stop-color="#2a68d8"/><stop offset="0.65" stop-color="#2236c0"/><stop offset="1" stop-color="#18208e"/></linearGradient></defs>
<path d="M83.4 515.6C86 508 92 501.5 99 500.8C107 500.5 113 504.5 117 510.5C119.5 515 121 520 120.8 524C117 528.5 111 529 104.5 527.6C96 525.5 88.5 520.5 83.4 515.6Z" fill="url(#capg)"/>
<path d="M88 506.5C92 502 96 500.8 100 500.8C107 501 112 504 116 509" stroke="#48c0dc" stroke-width="1.2" fill="none" opacity="0.8"/>
<path d="M117 511C119 515 120.5 519 120.6 523.5" stroke="#40b8d8" stroke-width="1.4" fill="none" opacity="0.8"/>
<g stroke="#111" stroke-width="1.1" fill="none">
<path d="M370.9 436.1L385.4 445.7L497.1 402.6L483.7 393.3M385.4 445.7V469.9L497.1 425.2V402.6M349.7 445.7L385.4 469.9"/>
</g>
<g stroke="#111" stroke-width="1.1" fill="none">
<path d="M113 525.4L160 507.5"/>
<path d="M184 498.3L290 457.9"/>
<path d="M294 456.4L395 417.9"/>
<path d="M425 406.5L447 398.1"/>
<path d="M115 508.2L124 504.7"/>
<path d="M148 495.3L157 491.8"/>
<path d="M182 482.1L191 478.6"/>
<path d="M219 467.6L228 464.1"/>
<path d="M256 453.2L265 449.7"/>
<path d="M292 439.2L301 435.7"/>
<path d="M322 427.5L331 424.0"/>
<path d="M348 417.3L357 413.8"/>
<path d="M374 407.2L383 403.7"/>
<path d="M398 397.8L407 394.3"/>
<path d="M426 386.9L435 383.4"/>
<path d="M454 376.0L463 372.5"/>
<path d="M618 312.0L627 308.5"/>
<path d="M372 423.7L395 414.9"/>
<path d="M425 403.5L447 395.1"/>
<path d="M625 324.3L635 320.5"/>
</g>
<g stroke="#111" stroke-width="0.8" fill="none"><path d="M99.5 524C96.5 529 100 534.5 108.5 534"/><path d="M101.5 524.5C99.5 529 102.5 532.8 109.5 532.5"/><path d="M103.5 525C102 528.5 105 531.2 110.5 531"/><path d="M98.5 526.5C99 531 103 533 106 533.2"/></g>
<g>
<path d="M117.5 513.1l2.2 -4.5 2 0.8 -1.5 4.2z" fill="#f0b000" opacity="0.9"/><path d="M118.5 511.1l1.2 -2.5 1.2 0.5 -0.8 2.2z" fill="#e05010" opacity="0.9"/>
<path d="M150.5 500.3l2.2 -4.5 2 0.8 -1.5 4.2z" fill="#f0b000" opacity="0.9"/><path d="M151.5 498.3l1.2 -2.5 1.2 0.5 -0.8 2.2z" fill="#e05010" opacity="0.9"/>
<path d="M188.5 485.4l2.2 -4.5 2 0.8 -1.5 4.2z" fill="#f0b000" opacity="0.9"/><path d="M189.5 483.4l1.2 -2.5 1.2 0.5 -0.8 2.2z" fill="#e05010" opacity="0.9"/>
<path d="M225.5 471.0l2.2 -4.5 2 0.8 -1.5 4.2z" fill="#f0b000" opacity="0.9"/><path d="M226.5 469.0l1.2 -2.5 1.2 0.5 -0.8 2.2z" fill="#e05010" opacity="0.9"/>
<path d="M261.5 457.0l2.2 -4.5 2 0.8 -1.5 4.2z" fill="#f0b000" opacity="0.9"/><path d="M262.5 455.0l1.2 -2.5 1.2 0.5 -0.8 2.2z" fill="#e05010" opacity="0.9"/>
<path d="M294.5 444.1l2.2 -4.5 2 0.8 -1.5 4.2z" fill="#f0b000" opacity="0.9"/><path d="M295.5 442.1l1.2 -2.5 1.2 0.5 -0.8 2.2z" fill="#e05010" opacity="0.9"/>
</g><g font-family="Liberation Sans" font-size="12" fill="#111" letter-spacing="0.6">
<text x="151" y="604.3">-100</text>
<text x="393" y="510.4">0</text>
<text x="606" y="423">100</text>
<text x="425.4" y="536.9">mm</text>
<text x="661.7" y="264.2">20</text>
<text x="697.3" y="285.1">0</text>
<text x="708.5" y="312.2">20</text>
<text x="706.9" y="336.4">10</text>
<text x="734.4" y="332.2">mm</text>
<text x="706.9" y="359.1">0</text>
<text x="687.6" y="249.2">mm</text>
</g></svg>
<div class="t" style="left:15px;top:72.3px;letter-spacing:1.12px">freq(1)=188 kHz</div>
<div class="t" style="left:297px;top:74.6px;letter-spacing:0.66px">Volume: Von Mises stress, peak (N/m<sup style="font-size:9px;position:relative;top:-1px;vertical-align:top;line-height:0;letter-spacing:0">2</sup>)</div>
<!-- colorbar -->
<svg width="828" height="778" viewBox="0 0 828 778" style="left:0;top:0">
<defs>
<linearGradient id="cb" x1="0" y1="126" x2="0" y2="738" gradientUnits="userSpaceOnUse">
<stop offset="0" stop-color="#7a0000"/>
<stop offset="0.0556" stop-color="#a80a0a"/>
<stop offset="0.1373" stop-color="#d41a0a"/>
<stop offset="0.219" stop-color="#e25a08"/>
<stop offset="0.268" stop-color="#e58010"/>
<stop offset="0.333" stop-color="#e0b000"/>
<stop offset="0.382" stop-color="#dce010"/>
<stop offset="0.448" stop-color="#b8f040"/>
<stop offset="0.513" stop-color="#80f080"/>
<stop offset="0.546" stop-color="#70f0a0"/>
<stop offset="0.611" stop-color="#40e8d0"/>
<stop offset="0.709" stop-color="#38b8f8"/>
<stop offset="0.775" stop-color="#3890f8"/>
<stop offset="0.873" stop-color="#3040e8"/>
<stop offset="0.938" stop-color="#2424b0"/>
<stop offset="1" stop-color="#1a1a80"/>
</linearGradient>
</defs>
<rect x="756.8" y="126.5" width="15.2" height="611.6" fill="url(#cb)" stroke="#4a4a4a" stroke-width="1"/>
<g stroke="#111" stroke-width="1">
<path d="M757 133.3h3M768.8 133.3h3 M757 209.3h3M768.8 209.3h3 M757 285.3h3M768.8 285.3h3 M757 361.3h3M768.8 361.3h3 M757 437.4h3M768.8 437.4h3 M757 513.4h3M768.8 513.4h3 M757 589.4h3M768.8 589.4h3 M757 665.4h3M768.8 665.4h3"/>
</g>
<g font-family="Liberation Sans" font-size="12" fill="#111" letter-spacing="0.6">
<text x="781.5" y="138">4</text>
<text x="781.5" y="214">3.5</text>
<text x="781.5" y="290">3</text>
<text x="781.5" y="366">2.5</text>
<text x="781.5" y="442">2</text>
<text x="781.5" y="518">1.5</text>
<text x="781.5" y="594">1</text>
<text x="781.5" y="670">0.5</text>
<text x="773" y="117.8" font-size="13" letter-spacing="0.9">×10</text>
<text x="798.6" y="111.2" font-size="9">4</text>
</g>
<!-- axis triad -->
<g stroke-width="1.6" fill="none">
<path d="M42.8 730V709" stroke="#3c80c4"/>
<path d="M42.8 730L28 720" stroke="#4ea646"/>
<path d="M42.8 730L62 722.4" stroke="#e0206a"/>
</g>
<path d="M42.8 704.6l-2.8 7.4h5.6z" fill="#3c80c4"/>
<path d="M25.4 718l7.6 1.4-3.2 4.6z" fill="#4ea646"/>
<path d="M66.7 720.9l-7.6 -0.6 2 5.2z" fill="#e0206a"/>
<g font-family="Liberation Sans" font-size="12" fill="#111">
<text x="40" y="701">z</text><text x="17" y="715">y</text><text x="70.4" y="721">x</text>
</g>
</svg>
</body></html>
